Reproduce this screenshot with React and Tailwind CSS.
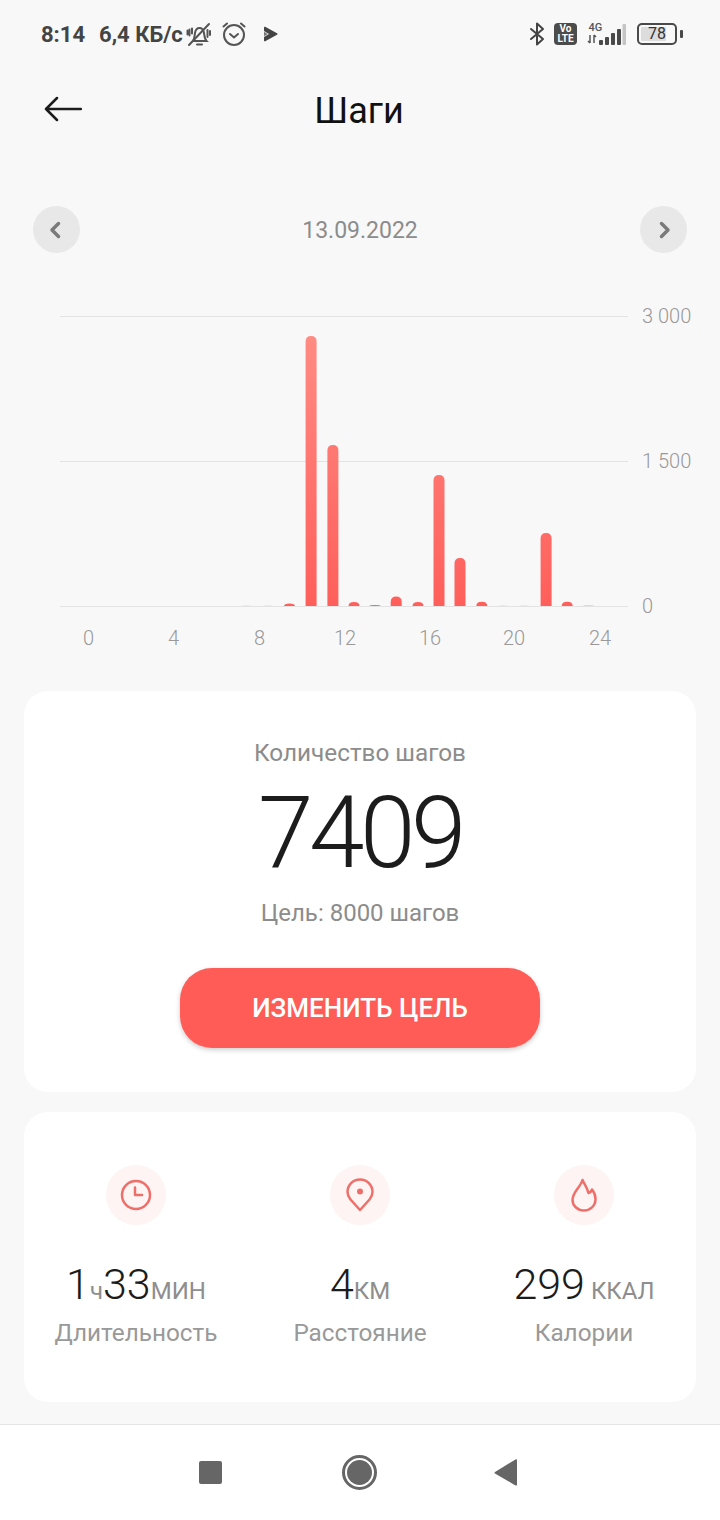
const bars = [
  { x: 241, top: 605.4, faint: true },
  { x: 262.5, top: 605.4, faint: true },
  { x: 284, top: 603.5 },
  { x: 305.6, top: 336 },
  { x: 327.4, top: 445 },
  { x: 348.5, top: 602 },
  { x: 369.5, top: 605 },
  { x: 390.7, top: 596.5 },
  { x: 412.5, top: 602 },
  { x: 433.5, top: 475 },
  { x: 454.5, top: 558 },
  { x: 476.3, top: 601.7 },
  { x: 497.5, top: 605.4, faint: true },
  { x: 519, top: 605.4, faint: true },
  { x: 540.6, top: 533 },
  { x: 561.7, top: 601.7 },
  { x: 583, top: 605, faint: true },
];

const barPath = (x, top) => {
  const w = 11;
  const h = 606 - top;
  const r = Math.min(5.5, h);
  return `M${x} 606V${top + r}Q${x} ${top} ${x + w / 2} ${top}Q${x + w} ${top} ${x + w} ${top + r}V606Z`;
};

const Chart = () => (
  <svg className="block" width="720" height="370" viewBox="0 290 720 370" fontFamily="Roboto, sans-serif">
    <defs>
      <linearGradient id="bar" gradientUnits="userSpaceOnUse" x1="0" y1="336" x2="0" y2="606">
        <stop offset="0" stopColor="#ff8b83" />
        <stop offset="1" stopColor="#ff5f5b" />
      </linearGradient>
    </defs>
    {[316, 461, 606].map((y) => (
      <line key={y} x1="60" x2="628" y1={y + 0.5} y2={y + 0.5} stroke="#e3e3e3" />
    ))}
    {bars.map((b) => (
      <path key={b.x} d={barPath(b.x, b.top)} fill="url(#bar)" opacity={b.faint ? 0.3 : 1} />
    ))}
    {[["3 000", 323], ["1 500", 468], ["0", 613]].map(([t, y]) => (
      <text key={t} x="642" y={y} fontSize="20" fontWeight="300" fill="#999999">{t}</text>
    ))}
    {[["0", 88.500], ["4", 173.500], ["8", 259.500], ["12", 345], ["16", 430], ["20", 514], ["24", 600]].map(([t, x]) => (
      <text key={t} x={x} y="645" fontSize="20" fontWeight="300" fill="#999999" textAnchor="middle">{t}</text>
    ))}
  </svg>
);

const Stat = ({ icon, value, label }) => (
  <div className="flex flex-col items-center">
    <div className="w-[60px] h-[60px] rounded-full bg-[#fdf4f3] flex items-center justify-center">{icon}</div>
    <div className="mt-[32px] h-[54px] flex items-baseline justify-center text-[#1c1c1c] text-[43px] leading-[54px] font-light">{value}</div>
    <div className="mt-[7px] text-[24.300px] leading-[30px] text-[#999999] font-normal">{label}</div>
  </div>
);

const Unit = ({ children }) => <span className="text-[24px] text-[#8e8e8e] font-normal">{children}</span>;

export default function App() {
  return (
    <div className="w-[720px] h-[1520px] bg-[#f8f8f8] flex flex-col font-['Roboto',sans-serif] overflow-hidden">
      {/* status bar */}
      <div className="h-[68px] flex items-center pl-[41px] pr-[37px] text-[#444444] text-[22px] font-bold">
        <span>8:14</span>
        <span className="ml-[14px]">6,4 КБ/с</span>
        <svg className="ml-[3px]" width="26" height="26" viewBox="0 0 26 26" fill="none" stroke="#555" strokeWidth="2" strokeLinecap="round">
          <path d="M7 20c1.500-2 1.500-5 2-8 .5-3 2-5 4.500-5s4 2 4.500 5c.5 3 .5 6 2.500 8H7z" />
          <path d="M11 23.500h5" />
          <path d="M3 24L23 3" />
          <path d="M3.500 8.500v6M1.500 9.500v4M6 7.500v5M21.500 9v7M24 10v4" />
        </svg>
        <svg className="ml-[9px]" width="26" height="26" viewBox="0 0 26 26" fill="none" stroke="#555" strokeWidth="2" strokeLinecap="round" strokeLinejoin="round">
          <circle cx="13" cy="14" r="10" />
          <path d="M9 13l4 3.500 4-3.500" />
          <path d="M2.500 5.500L6 2.500M23.500 5.500L20 2.500" />
        </svg>
        <svg className="ml-[16px]" width="15" height="16" viewBox="0 0 15 16" fill="#444">
          <path d="M1 1.500c0-.8.6-1 1.200-.7L14 7.200c.7.4.7 1.200 0 1.600L2.200 15.200c-.6.3-1.200.1-1.200-.7v-3.500l5-3-5-3z" />
          <path d="M1 5.800L4.800 8 1 10.200z" fill="#777" />
        </svg>
        <div className="flex-1" />
        <svg width="16" height="24" viewBox="0 0 16 24" fill="none" stroke="#444" strokeWidth="2" strokeLinejoin="round" strokeLinecap="round">
          <path d="M2 7l12 10-6 5.500V1.500L14 7 2 17" />
        </svg>
        <div className="ml-[9px] w-[23px] h-[22px] rounded-[4px] bg-[#4c4c4c] flex flex-col items-center justify-center text-white text-[10px] leading-[10px] font-bold">
          <span>Vo</span>
          <span>LTE</span>
        </div>
        <svg className="ml-[10px]" width="39" height="26" viewBox="0 0 39 26" fontFamily="Roboto, sans-serif">
          <text x="1.500" y="10" fontSize="11" fontWeight="500" fill="#555">4G</text>
          <path d="M3 14v8M1 20l2 2M7 22v-8M9 16l-2-2" stroke="#555" strokeWidth="1.500" fill="none" />
          <rect x="12" y="19" width="4" height="5" rx="1" fill="#4a4a4a" />
          <rect x="18" y="16" width="4" height="8" rx="1" fill="#4a4a4a" />
          <rect x="24" y="12" width="4" height="12" rx="1" fill="#4a4a4a" />
          <rect x="30" y="8" width="4" height="16" rx="1" fill="#4a4a4a" />
          <rect x="35.500" y="3" width="3.500" height="21" rx="1" fill="#c4c4c4" />
        </svg>
        <div className="ml-[11px] w-[40px] h-[22px] rounded-[5px] border-2 border-[#4a4a4a] p-[2px] relative flex">
          <div className="h-full w-[78%] bg-[#dcdcdc] rounded-[1px]" />
          <span className="absolute inset-0 flex items-center justify-center text-[16px] font-normal text-[#333333]">78</span>
        </div>
        <div className="ml-[3px] w-[3px] h-[8px] rounded-[1px] bg-[#4a4a4a]" />
      </div>

      {/* header */}
      <div className="h-[84px] relative flex items-center justify-center">
        <svg className="absolute left-[44px] top-[28px]" width="38" height="26" viewBox="0 0 38 26" fill="none" stroke="#1c1c1c" strokeWidth="2.500" strokeLinecap="round" strokeLinejoin="round">
          <path d="M37 13H2M13 2L2 13l11 11" />
        </svg>
        <h1 className="text-[36px] text-[#111111] font-normal relative top-[1px] -left-[1px]">Шаги</h1>
      </div>

      {/* date */}
      <div className="mt-[54px] h-[47px] px-[33px] flex items-center justify-between">
        <div className="w-[47px] h-[47px] rounded-full bg-[#e8e8e8] flex items-center pl-[16px]">
          <svg width="12" height="18" viewBox="0 0 12 18" fill="none" stroke="#7a7a7a" strokeWidth="3.500" strokeLinecap="round" strokeLinejoin="round">
            <path d="M9.500 2.500L3 9l6.500 6.500" />
          </svg>
        </div>
        <span className="text-[23px] leading-[47px] pt-[1px] text-[#8c8c8c] font-normal">13.09.2022</span>
        <div className="w-[47px] h-[47px] rounded-full bg-[#e8e8e8] flex items-center justify-end pr-[16px]">
          <svg width="12" height="18" viewBox="0 0 12 18" fill="none" stroke="#7a7a7a" strokeWidth="3.500" strokeLinecap="round" strokeLinejoin="round">
            <path d="M2.500 2.500L9 9l-6.500 6.500" />
          </svg>
        </div>
      </div>

      <div className="mt-[37px]">
        <Chart />
      </div>

      {/* steps card */}
      <div className="mt-[31px] mx-[24px] h-[401px] rounded-[24px] bg-white flex flex-col items-center pt-[46px]">
        <div className="text-[24.300px] leading-[32px] text-[#8c8c8c] font-normal">Количество шагов</div>
        <div className="mt-[16px] h-[96px] text-[100px] leading-[96px] tracking-[-4.500px] text-[#1c1c1c] font-light">7409</div>
        <div className="mt-[16px] text-[24px] leading-[32px] text-[#8c8c8c] font-normal">Цель: 8000 шагов</div>
        <button className="mt-[39px] w-[360px] h-[80px] rounded-[32px] bg-[#ff5c58] text-white text-[26px] font-medium shadow-[0_2px_5px_rgba(0,0,0,0.2)]">
          ИЗМЕНИТЬ ЦЕЛЬ
        </button>
      </div>

      {/* stats card */}
      <div className="mt-[20px] mx-[24px] h-[290px] rounded-[24px] bg-white grid grid-cols-3 pt-[53px]">
        <Stat
          icon={
            <svg width="32" height="32" viewBox="0 0 32 32" fill="none" stroke="#ee6f69" strokeWidth="2.500" strokeLinecap="round" strokeLinejoin="round">
              <circle cx="16" cy="16" r="14" />
              <path d="M15 8.500V16h7" />
            </svg>
          }
          value={<><span>1</span><Unit>ч</Unit><span>33</span><Unit>МИН</Unit></>}
          label="Длительность"
        />
        <Stat
          icon={
            <svg width="28" height="34" viewBox="0 0 28 34" fill="none" stroke="#ee6f69" strokeWidth="2.500" strokeLinejoin="round">
              <path d="M14 32L4.500 21.500C2.500 19 1.500 17 1.500 14 1.500 7 7 1.500 14 1.500S26.500 7 26.500 14c0 3-1 5-3 7.500L14 32z" />
              <circle cx="14" cy="13.500" r="3" fill="#ee6f69" stroke="none" />
            </svg>
          }
          value={<><span>4</span><Unit>КМ</Unit></>}
          label="Расстояние"
        />
        <Stat
          icon={
            <svg width="26" height="34" viewBox="0 0 26 34" fill="none" stroke="#ee6f69" strokeWidth="2.500" strokeLinejoin="round">
              <path d="M11.500 2C13 6 16 9 17.500 15 19 14.500 20.500 13 21 11.500 23.500 14.500 24.500 18 24.500 21 24.500 28 19 32.500 13 32.500 7 32.500 1.500 28 1.500 22 1.500 14 9 10 11.500 2z" />
            </svg>
          }
          value={<><span>299</span><Unit>&nbsp;ККАЛ</Unit></>}
          label="Калории"
        />
      </div>

      {/* nav bar */}
      <div className="mt-[22px] flex-1 bg-white border-t border-[#e4e4e4] flex items-center justify-center relative">
        <div className="absolute left-[199px] top-[36px] w-[23px] h-[23px] rounded-[2px] bg-[#666666]" />
        <div className="absolute left-[342px] top-[30px] w-[35px] h-[35px] rounded-full border-[3px] border-[#666666] flex items-center justify-center">
          <div className="w-[25px] h-[25px] rounded-full bg-[#666666]" />
        </div>
        <svg className="absolute left-[494px] top-[34px]" width="24" height="27" viewBox="0 0 24 27" fill="#666666">
          <path d="M23 1.500v24c0 1-.7 1.300-1.500 1L1 14.500c-.7-.5-.7-1 0-1.500L21.500.5c.8-.5 1.500 0 1.500 1z" />
        </svg>
      </div>
    </div>
  );
}
